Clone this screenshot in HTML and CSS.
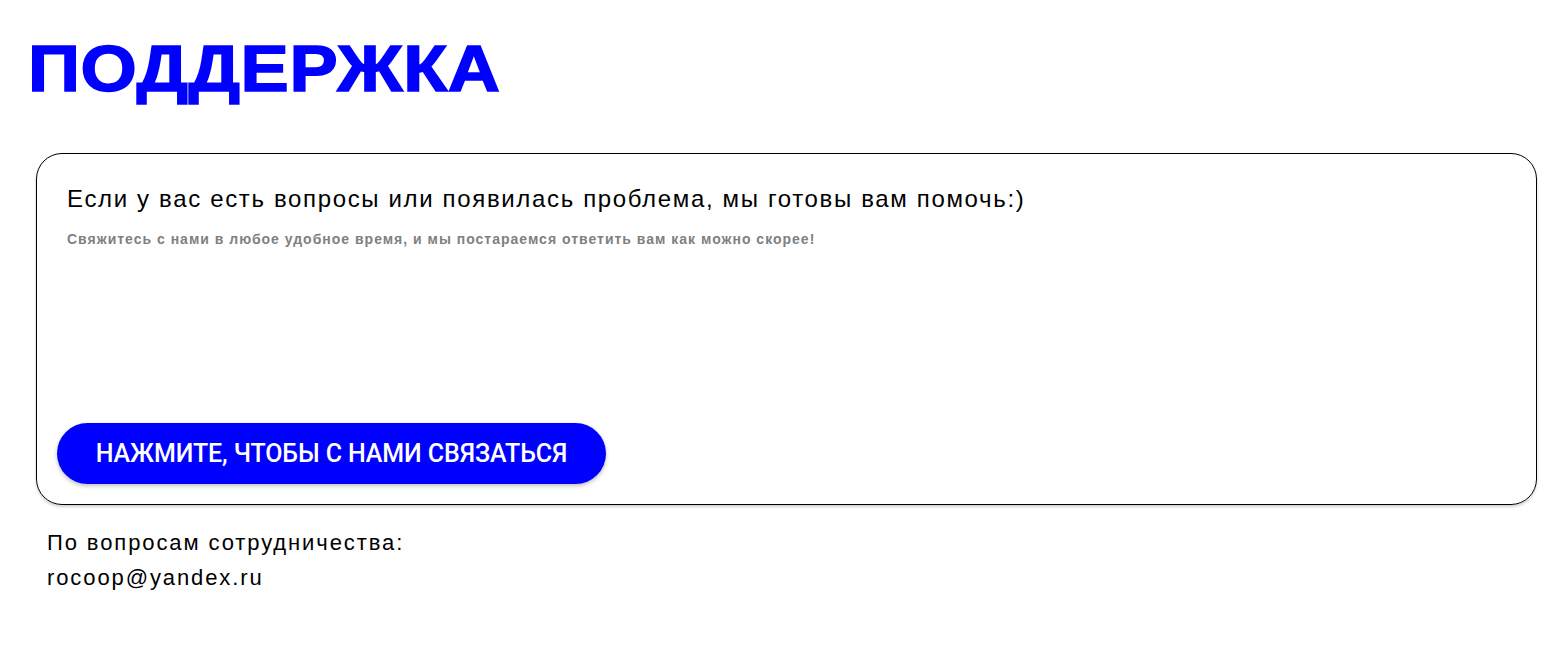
FILE: index.html
```html
<!DOCTYPE html>
<html lang="ru">
<head>
<meta charset="utf-8">
<link rel="stylesheet" href="styles.css">
</head>
<body>
<main class="page">
  <h1 class="title">ПОДДЕРЖКА</h1>
  <section class="card">
    <div class="card-text">
      <p class="lead">Если у вас есть вопросы или появилась проблема, мы готовы вам помочь:)</p>
      <p class="note">Свяжитесь с нами в любое удобное время, и мы постараемся ответить вам как можно скорее!</p>
    </div>
    <button class="cta" type="button">НАЖМИТЕ, ЧТОБЫ С НАМИ СВЯЗАТЬСЯ</button>
  </section>
  <div class="contacts">
    <p>По вопросам сотрудничества:</p>
    <p>rocoop@yandex.ru</p>
  </div>
</main>
</body>
</html>
```
FILE: styles.css
```css
* { box-sizing: border-box; }
html, body { margin: 0; padding: 0; background: #fff; }
body { font-family: "Liberation Sans", Arial, sans-serif; color: #000; }
.page { padding: 28px 29px 0 36px; }
.title {
  width: max-content;
  margin: 0 0 0 -8px;
  font-size: 64px;
  line-height: 82px;
  font-weight: 700;
  color: #0000ff;
  -webkit-text-stroke: 1.5px #0000ff;
  transform: scaleX(1.13);
  transform-origin: left center;
  letter-spacing: 0.5px;
}
.card {
  margin-top: 43px;
  height: 352px;
  border: 1px solid #000;
  border-radius: 26px;
  box-shadow: 0 2px 3px rgba(0,0,0,0.18);
  padding: 30px 20px 20px 20px;
  display: flex;
  flex-direction: column;
  justify-content: space-between;
}
.card-text { padding-left: 10px; }
.lead { margin: 0; font-size: 24px; line-height: 30px; letter-spacing: 1.65px; }
.note { margin: 17px 0 0; font-size: 14px; font-weight: 700; color: #808080; letter-spacing: 1px; }
.cta {
  align-self: flex-start;
  width: 549px;
  height: 61px;
  border: none;
  border-radius: 31px;
  background: #0000ff;
  color: #fff;
  font-family: Roboto, "Liberation Sans", sans-serif;
  font-size: 25px;
  font-weight: 500;
  letter-spacing: -0.1px;
  box-shadow: 0 2px 4px rgba(0,0,0,0.25);
  cursor: pointer;
}
.contacts { padding: 20px 0 0 11px; font-size: 22px; line-height: 35px; letter-spacing: 1.9px; }
.contacts p { margin: 0; }
```
